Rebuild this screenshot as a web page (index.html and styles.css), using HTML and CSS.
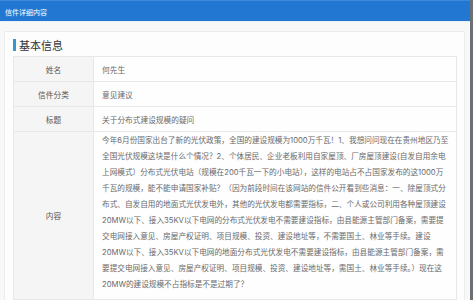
FILE: index.html
```html
<!DOCTYPE html>
<html lang="zh-CN">
<head>
    <meta charset="UTF-8">
    <meta name="viewport" content="width=device-width, initial-scale=1.0">
    <title>信件详细内容</title>
    <link rel="stylesheet" href="styles.css">
</head>
<body>
    <!-- 顶部标题栏 -->
    <div class="topbar">信件详细内容</div>

    <!-- 信件内容面板 -->
    <div class="panel">
        <h2 class="panel-title">基本信息</h2>
        <table class="info-table">
            <tr>
                <th>姓名</th>
                <td>何先生</td>
            </tr>
            <tr>
                <th>信件分类</th>
                <td>意见建议</td>
            </tr>
            <tr>
                <th>标题</th>
                <td>关于分布式建设规模的疑问</td>
            </tr>
            <tr class="content-row">
                <th>内容</th>
                <td>今年6月份国家出台了新的光伏政策，全国的建设规模为1000万千瓦！1、我想问问现在在贵州地区乃至全国光伏规模这块是什么个情况？2、个体居民、企业老板利用自家屋顶、厂房屋顶建设(自发自用余电上网模式）分布式光伏电站（规模在200千瓦一下的小电站），这样的电站占不占国家发布的这1000万千瓦的规模，能不能申请国家补贴？（因为前段时间在该网站的信件公开看到些消息：一、除屋顶式分布式、自发自用的地面式光伏发电外，其他的光伏发电都需要指标，二、个人或公司利用各种屋顶建设20MW以下、接入35KV以下电网的分布式光伏发电不需要建设指标，由县能源主管部门备案，需要提交电网接入意见、房屋产权证明、项目规模、投资、建设地址等，不需要国土、林业等手续。建设20MW以下、接入35KV以下电网的地面分布式光伏发电不需要建设指标，由县能源主管部门备案，需要提交电网接入意见、房屋产权证明、项目规模、投资、建设地址等，需国土、林业等手续。）现在这20MW的建设规模不占指标是不是过期了？</td>
            </tr>
            <tr>
                <th>&nbsp;</th>
                <td>&nbsp;</td>
            </tr>
        </table>
    </div>
</body>
</html>
```

FILE: styles.css
```css
/* 全局样式 */
* {
    margin: 0;
    padding: 0;
    box-sizing: border-box;
}

body {
    height: 300px;
    overflow: hidden;
    background-color: #f8f8f8;
    border-right: 3px solid #6b6f74;
    font-family: "Noto Sans CJK SC", "Microsoft YaHei", Arial, sans-serif;
    color: #555;
}

/* 顶部标题栏 */
.topbar {
    height: 22px;
    line-height: 22px;
    padding-left: 5px;
    background-color: #2277d3;
    border-top: 1px solid #3d8ad8;
    border-bottom: 1px solid #e6f0fa;
    color: #fff;
    font-size: 7px;
}

/* 面板 */
.panel {
    margin: 9px 5px 0 4px;
    padding: 6px 8px 0 8px;
    background-color: #fdfdfd;
    border: 1px solid #ececec;
    height: 300px;
}

.panel-title {
    display: flex;
    align-items: center;
    font-size: 11px;
    font-weight: normal;
    color: #333;
    line-height: 14px;
    margin-bottom: 4px;
}

.panel-title::before {
    content: "";
    display: inline-block;
    width: 3px;
    height: 12px;
    margin-right: 3px;
    background-color: #3497cf;
}

/* 表格 */
.info-table {
    width: 444px;
    border-collapse: collapse;
    font-size: 7.7px;
}

.info-table th,
.info-table td {
    border: 1px solid #e8e8e8;
    height: 25px;
    font-weight: normal;
}

.info-table th {
    width: 80px;
    background-color: #f5f5f5;
    text-align: center;
    color: #555;
}

.info-table td {
    padding: 0 8px;
    background-color: #fefefe;
    color: #6a6a6a;
}

.content-row td {
    padding: 1px 6px 6px 8px;
    line-height: 16px;
    font-size: 7.65px;
    font-family: Inter, "Noto Sans CJK SC", sans-serif;
}
```
